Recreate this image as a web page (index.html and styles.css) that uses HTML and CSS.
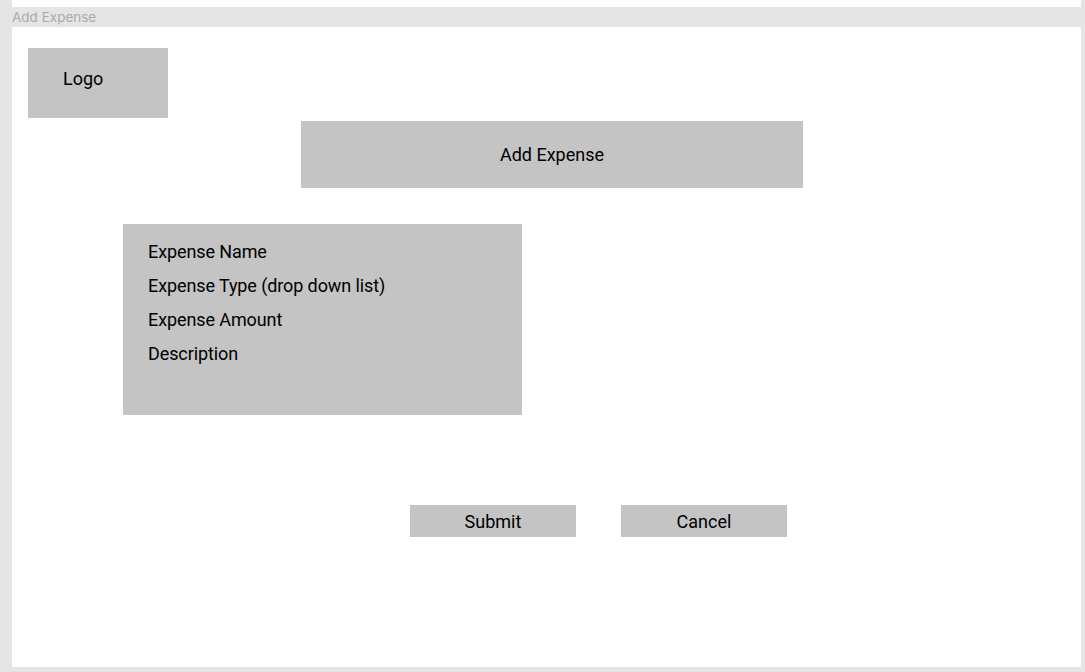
FILE: index.html
```html
<!DOCTYPE html>
<html lang="en">
<head>
    <meta charset="UTF-8">
    <meta name="viewport" content="width=device-width, initial-scale=1.0">
    <title>Add Expense</title>
    <link rel="stylesheet" href="styles.css">
</head>
<body>
    <div class="prev-frame"></div>
    <div class="frame-label">Add Expense</div>

    <div class="frame">
        <div class="logo">Logo</div>

        <div class="page-title">Add Expense</div>

        <div class="form-box">
            <div class="field">Expense Name</div>
            <div class="field">Expense Type (drop down list)</div>
            <div class="field">Expense Amount</div>
            <div class="field">Description</div>
        </div>

        <div class="actions">
            <div class="btn">Submit</div>
            <div class="btn">Cancel</div>
        </div>
    </div>
</body>
</html>
```

FILE: styles.css
```css
* {
    box-sizing: border-box;
    margin: 0;
    padding: 0;
}

body {
    font-family: Roboto, 'Liberation Sans', sans-serif;
    background: #e5e5e5;
    color: #000;
    width: 1085px;
    height: 672px;
    overflow: hidden;
}

.prev-frame {
    margin-left: 12px;
    width: 1069px;
    height: 7px;
    background: white;
}

.frame-label {
    height: 20px;
    padding-left: 12px;
    font-family: Inter, 'Liberation Sans', sans-serif;
    font-size: 13.5px;
    line-height: 21px;
    color: #aaaaaa;
}

.frame {
    margin-left: 12px;
    width: 1069px;
    height: 640px;
    background: white;
    padding-top: 21px;
    font-size: 18px;
}

.logo {
    margin-left: 16px;
    width: 140px;
    height: 70px;
    background: #c4c4c4;
    padding: 20px 0 0 35px;
    line-height: 21px;
}

.page-title {
    margin: 3px 0 0 289px;
    width: 502px;
    height: 67px;
    background: #c4c4c4;
    display: flex;
    align-items: center;
    justify-content: center;
}

.form-box {
    margin: 36px 0 0 111px;
    width: 399px;
    height: 191px;
    background: #c4c4c4;
    padding: 11px 0 0 25px;
}

.field {
    line-height: 34px;
    letter-spacing: -0.1px;
}

.actions {
    display: flex;
    gap: 45px;
    margin: 90px 0 0 398px;
}

.btn {
    width: 166px;
    height: 32px;
    background: #c4c4c4;
    display: flex;
    align-items: center;
    justify-content: center;
}
```
